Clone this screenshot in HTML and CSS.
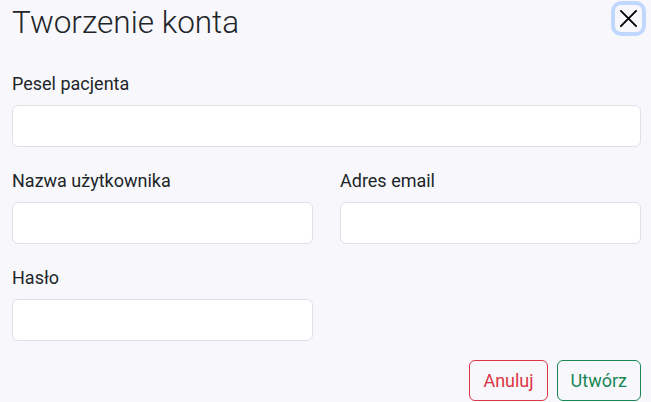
FILE: index.html
```html
<!DOCTYPE html>
<html lang="pl">
<head>
<meta charset="utf-8">
<link rel="stylesheet" href="styles.css">
</head>
<body>
<div class="modal">
  <header class="modal-header">
    <h1 class="modal-title">Tworzenie konta</h1>
    <button class="btn-close" type="button" aria-label="Zamknij">
      <svg width="20" height="20" viewBox="0 0 20 20"><path d="M2 2 L18 18 M18 2 L2 18" stroke="#000" stroke-width="2" fill="none" stroke-linecap="round"/></svg>
    </button>
  </header>
  <form class="form">
    <div class="field">
      <label class="label">Pesel pacjenta</label>
      <input class="input" type="text">
    </div>
    <div class="row">
      <div class="field">
        <label class="label">Nazwa użytkownika</label>
        <input class="input" type="text">
      </div>
      <div class="field">
        <label class="label">Adres email</label>
        <input class="input" type="email">
      </div>
    </div>
    <div class="row">
      <div class="field">
        <label class="label">Hasło</label>
        <input class="input" type="password">
      </div>
      <div></div>
    </div>
    <div class="footer">
      <button class="btn btn-danger" type="button">Anuluj</button>
      <button class="btn btn-success" type="button">Utwórz</button>
    </div>
  </form>
</div>
</body>
</html>
```
FILE: styles.css
```css
* { box-sizing: border-box; }
html, body { margin: 0; padding: 0; }
body {
  background: #f8f8fc;
  font-family: Roboto, "Liberation Sans", sans-serif;
  color: #212529;
  width: 651px;
  height: 402px;
  overflow: hidden;
}
.modal {
  padding: 4px 10px 0 12px;
}
.modal-header {
  display: flex;
  justify-content: space-between;
  align-items: flex-start;
}
.modal-title {
  margin: 0;
  font-size: 31.5px;
  font-weight: 300;
  line-height: 38px;
  color: #212529;
}
.btn-close {
  width: 27px;
  height: 27px;
  margin: 1px -1px 0 0;
  padding: 0;
  border: none;
  border-radius: 6px;
  background: transparent;
  box-shadow: 0 0 0 4px #c0d8fd;
  display: flex;
  align-items: center;
  justify-content: center;
}
.btn-close svg { width: 19px; height: 19px; }
.form {
  display: flex;
  flex-direction: column;
  gap: 20px;
  margin-top: 28px;
}
.row {
  display: grid;
  grid-template-columns: 1fr 1fr;
  gap: 27px;
}
.field {
  display: flex;
  flex-direction: column;
}
.label {
  font-size: 18px;
  line-height: 27px;
  margin-bottom: 8px;
}
.input {
  height: 42px;
  border: 1px solid #dee2e6;
  border-radius: 6px;
  background: #fff;
  font: inherit;
  padding: 6px 12px;
}
.footer {
  display: flex;
  justify-content: flex-end;
  gap: 9px;
  margin-top: -1px;
}
.btn {
  font-family: Roboto, "Liberation Sans", sans-serif;
  font-size: 18px;
  line-height: 27px;
  padding: 6px 13px;
  border-radius: 6px;
  background: transparent;
  border: 1px solid;
}
.btn-danger { color: #dc3545; border-color: #dc3545; }
.btn-success { color: #198754; border-color: #198754; }
```
